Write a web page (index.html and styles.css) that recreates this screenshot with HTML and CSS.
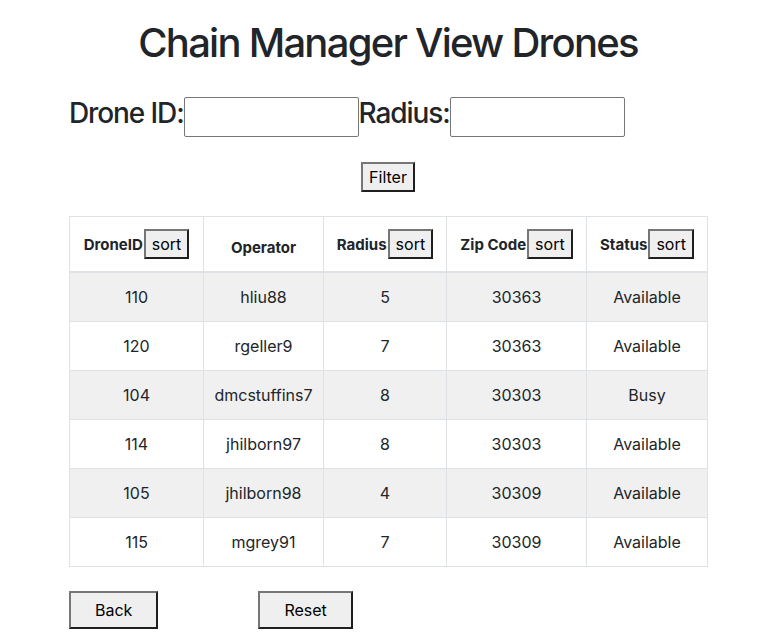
FILE: index.html
```html
<!DOCTYPE html>
<html lang="en">
<head>
<meta charset="utf-8">
<title>Chain Manager View Drones</title>
<link rel="stylesheet" href="styles.css">
</head>
<body>
<div class="page">
  <h1 class="title">Chain Manager View Drones</h1>
  <form class="filters">
    <label class="field-label" for="droneId">Drone ID:</label>
    <input class="field-input" id="droneId" type="text">
    <label class="field-label" for="radius">Radius:</label>
    <input class="field-input" id="radius" type="text">
  </form>
  <div class="filter-row">
    <button class="btn" type="button">Filter</button>
  </div>
  <table class="drones">
    <colgroup>
      <col class="c1"><col class="c2"><col class="c3"><col class="c4"><col class="c5">
    </colgroup>
    <thead>
      <tr>
        <th>DroneID<button class="btn" type="button">sort</button></th>
        <th>Operator</th>
        <th>Radius<button class="btn" type="button">sort</button></th>
        <th>Zip Code<button class="btn" type="button">sort</button></th>
        <th>Status<button class="btn" type="button">sort</button></th>
      </tr>
    </thead>
    <tbody>
      <tr><td>110</td><td>hliu88</td><td>5</td><td>30363</td><td>Available</td></tr>
      <tr><td>120</td><td>rgeller9</td><td>7</td><td>30363</td><td>Available</td></tr>
      <tr><td>104</td><td>dmcstuffins7</td><td>8</td><td>30303</td><td>Busy</td></tr>
      <tr><td>114</td><td>jhilborn97</td><td>8</td><td>30303</td><td>Available</td></tr>
      <tr><td>105</td><td>jhilborn98</td><td>4</td><td>30309</td><td>Available</td></tr>
      <tr><td>115</td><td>mgrey91</td><td>7</td><td>30309</td><td>Available</td></tr>
    </tbody>
  </table>
  <div class="actions">
    <button class="btn btn-lg btn-back" type="button">Back</button>
    <button class="btn btn-lg" type="button">Reset</button>
  </div>
</div>
</body>
</html>
```
FILE: styles.css
```css
html, body {
  margin: 0;
  padding: 0;
  background: #fff;
}
body {
  font-family: Inter, "Noto Sans", "Liberation Sans", sans-serif;
  font-size: 16px;
  line-height: 1.5;
  color: #212529;
}
.page {
  width: 638px;
  margin-left: 69px;
  padding-top: 19px;
}
.title {
  margin: 0;
  font-size: 40px;
  font-weight: 500;
  line-height: 1.2;
  text-align: center;
  letter-spacing: -1.75px;
}
.filters {
  margin: 30px 0 0;
  display: flex;
  align-items: flex-start;
}
.field-label {
  font-size: 28px;
  font-weight: 500;
  line-height: 1.2;
  letter-spacing: -1.1px;
}
.field-input {
  box-sizing: border-box;
  width: 175px;
  height: 40px;
  margin: 0;
  border: 1px solid #767676;
  border-radius: 2px;
  background: #fff;
  font-family: inherit;
  font-size: 16px;
}
.filter-row {
  margin-top: 25px;
  display: flex;
  justify-content: center;
}
.btn {
  font-family: inherit;
  font-size: 16px;
  line-height: 24px;
  color: #000;
  background: #efefef;
  padding: 1px 6px;
  margin: 0;
  border-style: solid;
  border-width: 2px;
  border-color: #767676 #1f1f1f #1f1f1f #767676;
  border-radius: 0;
}
.drones {
  margin-top: 24px;
  width: 638px;
  border-collapse: collapse;
  table-layout: fixed;
  border: 1px solid #dee2e6;
}
.c1 { width: 134px; }
.c2 { width: 120px; }
.c3 { width: 123px; }
.c4 { width: 140px; }
.c5 { width: 121px; }
.drones th,
.drones td {
  border: 1px solid #dee2e6;
  padding: 12px 0;
  text-align: center;
  white-space: nowrap;
}
.drones th {
  font-size: 15px;
  font-weight: 700;
  vertical-align: bottom;
  border-bottom: 2px solid #dee2e6;
  padding: 12px 0 12px;
}
.drones th .btn {
  margin-left: 1px;
}
.drones td {
  vertical-align: top;
  height: 24px;
}
.drones tbody tr:nth-child(odd) {
  background: #f0f0f0;
}
.actions {
  margin-top: 24px;
  display: flex;
}
.btn-lg {
  padding: 5px 24px;
}
.btn-back {
  margin-right: 100px;
}
```
